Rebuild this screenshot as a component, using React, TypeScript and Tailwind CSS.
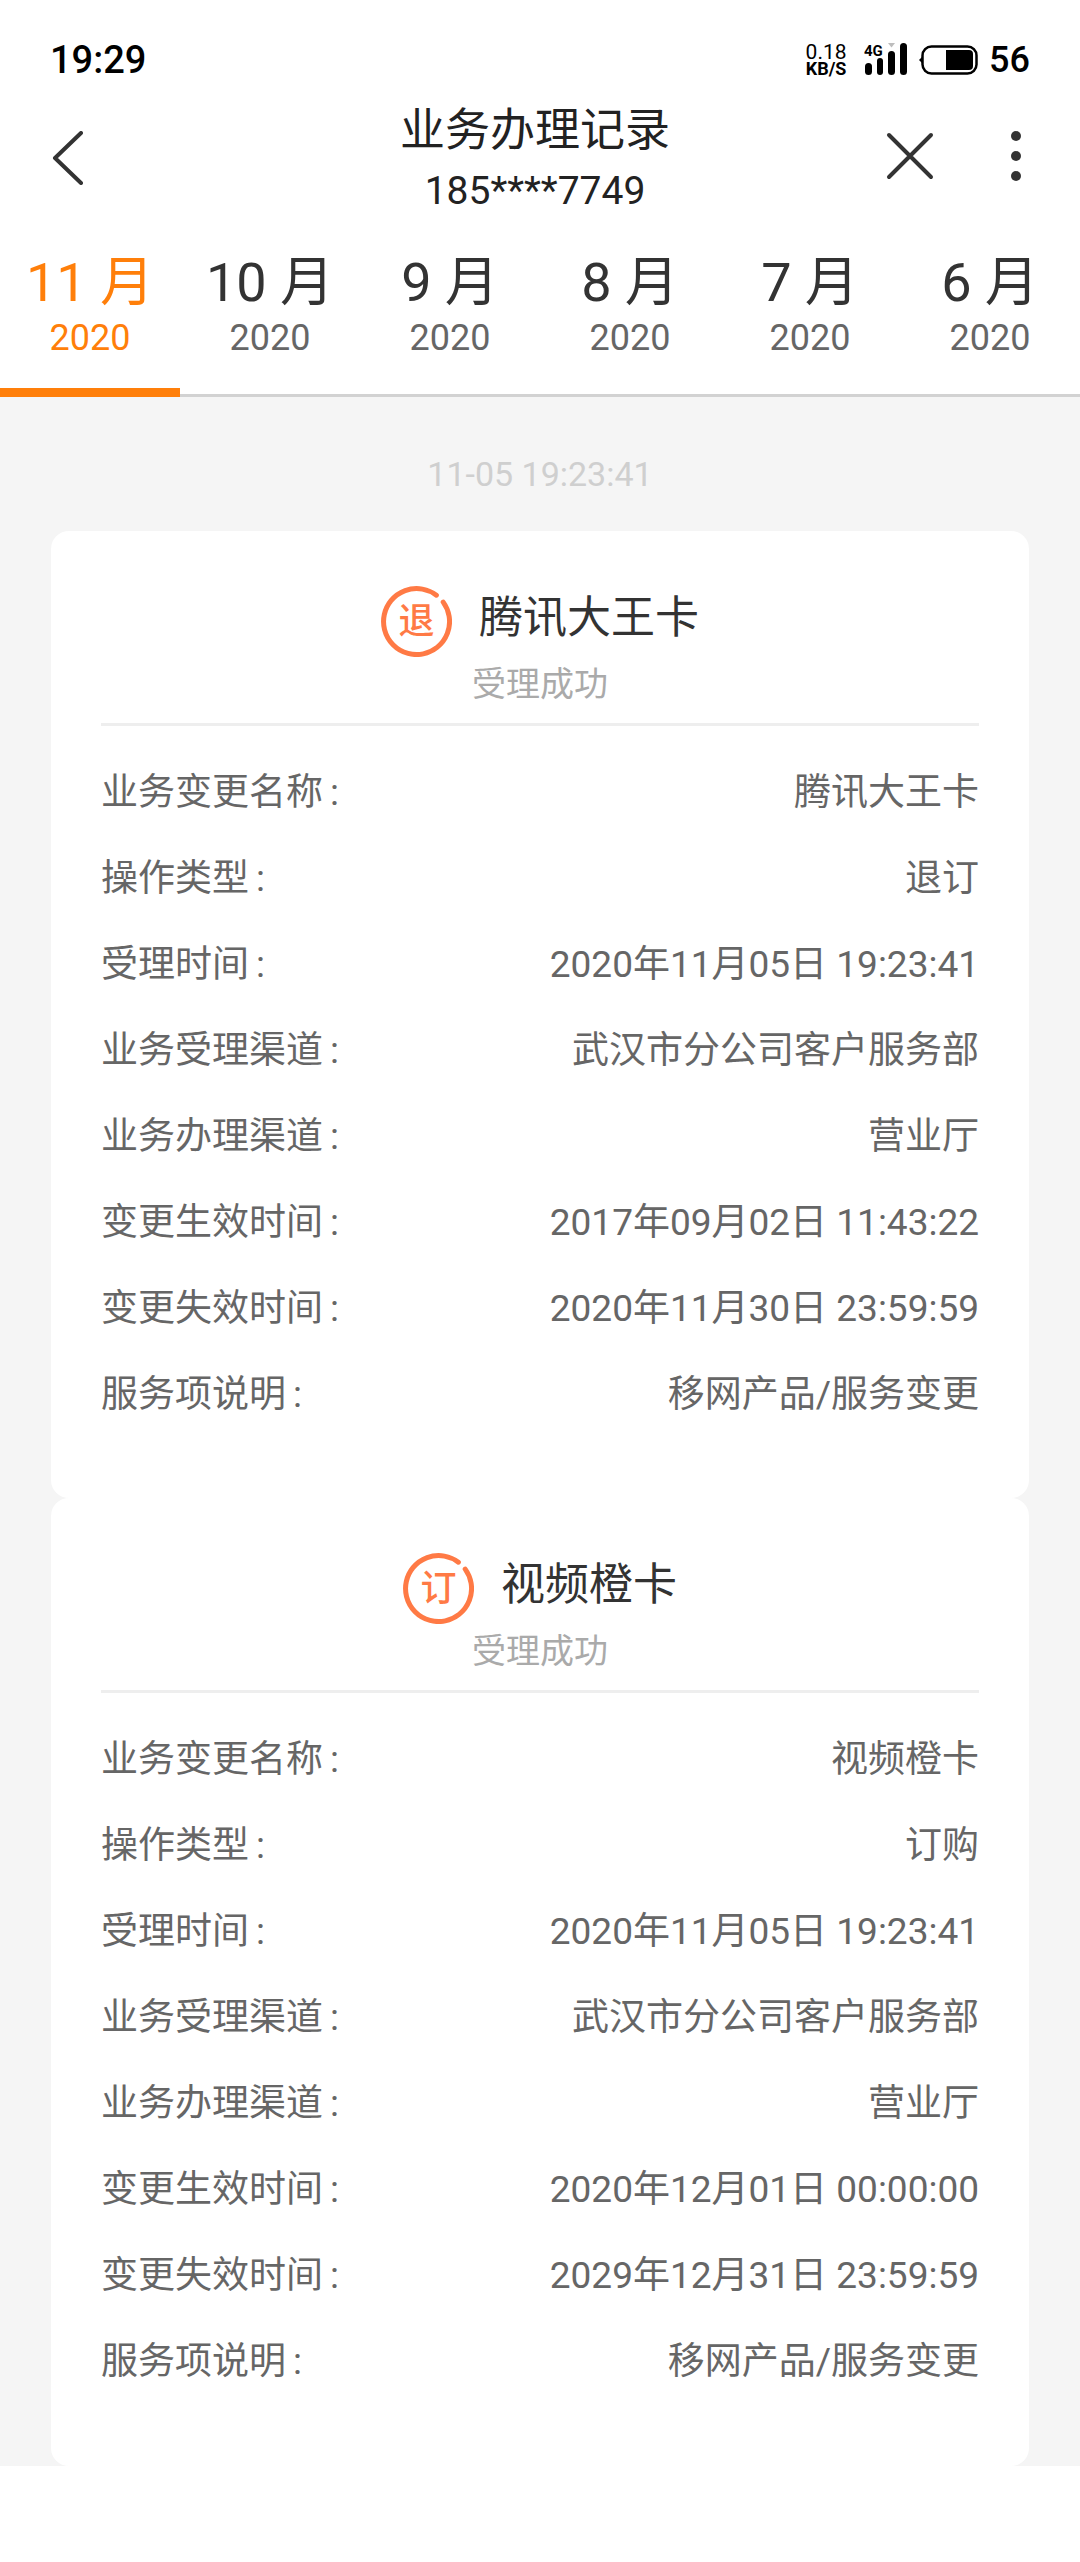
const months = ["11 月", "10 月", "9 月", "8 月", "7 月", "6 月"];

type Row = { label: string; value: string };

type Record = {
  badge: string;
  title: string;
  rows: Row[];
};

const records: Record[] = [
  {
    badge: "退",
    title: "腾讯大王卡",
    rows: [
      { label: "业务变更名称", value: "腾讯大王卡" },
      { label: "操作类型", value: "退订" },
      { label: "受理时间", value: "2020年11月05日 19:23:41" },
      { label: "业务受理渠道", value: "武汉市分公司客户服务部" },
      { label: "业务办理渠道", value: "营业厅" },
      { label: "变更生效时间", value: "2017年09月02日 11:43:22" },
      { label: "变更失效时间", value: "2020年11月30日 23:59:59" },
      { label: "服务项说明", value: "移网产品/服务变更" },
    ],
  },
  {
    badge: "订",
    title: "视频橙卡",
    rows: [
      { label: "业务变更名称", value: "视频橙卡" },
      { label: "操作类型", value: "订购" },
      { label: "受理时间", value: "2020年11月05日 19:23:41" },
      { label: "业务受理渠道", value: "武汉市分公司客户服务部" },
      { label: "业务办理渠道", value: "营业厅" },
      { label: "变更生效时间", value: "2020年12月01日 00:00:00" },
      { label: "变更失效时间", value: "2029年12月31日 23:59:59" },
      { label: "服务项说明", value: "移网产品/服务变更" },
    ],
  },
];

function StatusBar() {
  return (
    <div className="flex h-[100px] items-center justify-between pt-[20px] pl-[50px] pr-[50px] text-black">
      <span className="text-[38px] font-medium leading-none">19:29</span>
      <div className="flex items-center">
        <div className="flex w-[44px] flex-col items-center">
          <span className="text-[21px] leading-[18px]">0.18</span>
          <span className="text-[18px] font-bold leading-[16px]">KB/S</span>
        </div>
        <svg className="ml-[16px]" width="46" height="34" viewBox="0 0 46 34">
          <text x="0" y="13" fontSize="15" fontWeight="700" fill="#000">4G</text>
          <rect x="1" y="20" width="7" height="12" rx="3.5" fill="#000" />
          <rect x="13" y="15" width="6" height="17" rx="3" fill="#000" />
          <rect x="24" y="8" width="7" height="24" rx="3.5" fill="#000" />
          <rect x="36" y="0" width="7" height="32" rx="3.5" fill="#000" />
          <path d="M24 0h7l-3.5 4.5z" fill="#bdbdbd" />
        </svg>
        <svg className="ml-[8px]" width="60" height="30" viewBox="0 0 60 30">
          <path d="M4 12 1 15l3 3z" fill="#000" />
          <rect x="4.5" y="1.5" width="54" height="27" rx="9" fill="none" stroke="#000" strokeWidth="2.5" />
          <path d="M28 5h23a4 4 0 0 1 4 4v12a4 4 0 0 1-4 4H28z" fill="#000" />
        </svg>
        <span className="ml-[11px] text-[36px] font-medium leading-none">56</span>
      </div>
    </div>
  );
}

function NavBar() {
  return (
    <div className="flex h-[140px] items-start pt-[2px]">
      <div className="flex h-[112px] w-[198px] items-center pl-[52px]">
        <svg width="32" height="54" viewBox="0 0 32 54" fill="none" stroke="#333" strokeWidth="4" strokeLinecap="round" strokeLinejoin="round">
          <path d="M29 2 3 27l26 25" />
        </svg>
      </div>
      <div className="flex-1 text-center text-[#222]">
        <div className="text-[45px] leading-[58px]">业务办理记录</div>
        <div className="mt-[3px] text-[39px] leading-[56px]">185****7749</div>
      </div>
      <div className="flex h-[108px] w-[208px] items-center pl-[14px]">
        <svg width="48" height="48" viewBox="0 0 48 48" fill="none" stroke="#333" strokeWidth="4" strokeLinecap="round">
          <path d="M3 3 45 45M45 3 3 45" />
        </svg>
        <div className="ml-[77px] flex flex-col gap-[10px]">
          <span className="h-[10px] w-[10px] rounded-full bg-[#333]" />
          <span className="h-[10px] w-[10px] rounded-full bg-[#333]" />
          <span className="h-[10px] w-[10px] rounded-full bg-[#333]" />
        </div>
      </div>
    </div>
  );
}

function MonthTabs() {
  return (
    <div className="flex h-[157px] border-b-[3px] border-[#d2d2d2]">
      {months.map((month, i) => (
        <div
          key={month}
          className={`-mb-[3px] w-[180px] pt-[14px] text-center ${i === 0 ? "border-b-[9px] border-[#ff7f0a] text-[#ff7f0a]" : "text-[#666]"}`}
        >
          <div className={`text-[54px] leading-[58px] ${i === 0 ? "" : "text-[#333]"}`}>{month}</div>
          <div className="mt-[4px] text-[36px] leading-[44px]">2020</div>
        </div>
      ))}
    </div>
  );
}

function Badge({ text }: { text: string }) {
  return (
    <svg width="71" height="71" viewBox="0 0 71 71" className="shrink-0">
      <path
        d="M55.4 9.2A33 33 0 1 0 62.2 16.1"
        fill="none"
        stroke="#ff7a45"
        strokeWidth="5"
        strokeLinecap="round"
      />
      <text x="35.5" y="48" fontSize="36" fontWeight="500" textAnchor="middle" fill="#ff7a45">
        {text}
      </text>
    </svg>
  );
}

function RecordCard({ record, height }: { record: Record; height: string }) {
  return (
    <div className={`rounded-[18px] bg-white px-[50px] pt-[55px] ${height}`}>
      <div className="flex h-[71px] items-center justify-center gap-[27px]">
        <Badge text={record.badge} />
        <span className="-mt-[8px] text-[44px] leading-none text-[#333]">{record.title}</span>
      </div>
      <div className="mt-[7px] text-center text-[34px] leading-[40px] text-[#aaa]">受理成功</div>
      <div className="mt-[19px] h-[3px] bg-[#eeeeee]" />
      <div className="mt-[24px]">
        {record.rows.map((row) => (
          <div key={row.label} className="flex h-[86px] items-center justify-between text-[37px] text-[#666]">
            <span>
              {row.label}
              <span className="ml-[7px]">:</span>
            </span>
            <span>{row.value}</span>
          </div>
        ))}
      </div>
    </div>
  );
}

export default function App() {
  return (
    <div className="flex h-[2562px] w-[1080px] flex-col overflow-hidden bg-white font-['Roboto','Noto_Sans_CJK_SC',sans-serif]">
      <StatusBar />
      <NavBar />
      <MonthTabs />
      <div className="h-[2069px] bg-[#f5f5f5] px-[51px]">
        <div className="flex h-[134px] items-center justify-center pt-[20px] text-[34px] text-[#cfcfcf]">
          11-05 19:23:41
        </div>
        {records.map((record, i) => (
          <RecordCard key={record.title} record={record} height={i === 0 ? "h-[967px]" : "h-[968px]"} />
        ))}
      </div>
    </div>
  );
}
